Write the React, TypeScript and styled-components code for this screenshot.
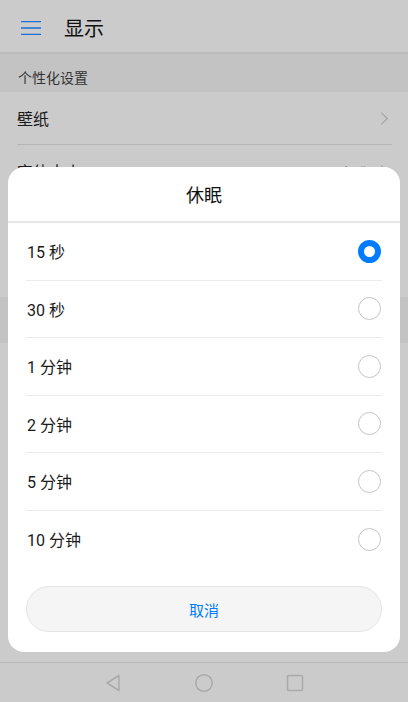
import React from "react";
import styled, { createGlobalStyle } from "styled-components";

const GlobalStyle = createGlobalStyle`
  html, body {
    margin: 0;
    padding: 0;
    height: 100%;
  }
  body {
    font-family: Roboto, "Noto Sans CJK SC", "Noto Sans", sans-serif;
    background: #cbcbcb;
    -webkit-font-smoothing: antialiased;
  }
`;

const options = ["15 秒", "30 秒", "1 分钟", "2 分钟", "5 分钟", "10 分钟"];

export default function App() {
  return (
    <Screen>
      <GlobalStyle />
      <Page>
        <Header>
          <MenuIcon viewBox="0 0 22 16">
            <path d="M0 1h22M0 8h22M0 15h22" stroke="#1a6fd6" strokeWidth="1.6" />
          </MenuIcon>
          <HeaderTitle>显示</HeaderTitle>
        </Header>
        <SectionTitle>个性化设置</SectionTitle>
        <Row>
          <RowLabel>壁纸</RowLabel>
          <Chevron />
        </Row>
        <Row>
          <RowLabel>字体大小</RowLabel>
          <RowValue>标准</RowValue>
          <Chevron />
        </Row>
        {/* rows hidden under the dialog */}
        <Row $height={98} />
        <SectionTitle $tall />
        <Row />
        <Row />
        <Row />
        <Spacer />
        <NavBar>
          <svg width="20" height="20" viewBox="0 0 20 20">
            <path d="M16 2.5 L4 10 L16 17.5 Z" fill="none" stroke="#aaaaaa" strokeWidth="1.5" strokeLinejoin="round" />
          </svg>
          <svg width="20" height="20" viewBox="0 0 20 20">
            <circle cx="10" cy="10" r="8.3" fill="none" stroke="#aaaaaa" strokeWidth="1.5" />
          </svg>
          <svg width="20" height="20" viewBox="0 0 20 20">
            <rect x="2.5" y="2.5" width="15" height="15" rx="1.2" fill="none" stroke="#aaaaaa" strokeWidth="1.5" />
          </svg>
        </NavBar>
      </Page>

      <Dialog>
        <DialogTitle>休眠</DialogTitle>
        <OptionList>
          {options.map((label, i) => (
            <OptionRow key={label} $last={i === options.length - 1}>
              <OptionLabel>{label}</OptionLabel>
              <Radio $checked={i === 0} />
            </OptionRow>
          ))}
        </OptionList>
        <CancelButton>取消</CancelButton>
      </Dialog>
    </Screen>
  );
}

const Screen = styled.div`
  position: relative;
  width: 408px;
  height: 702px;
  overflow: hidden;
`;

const Page = styled.div`
  display: flex;
  flex-direction: column;
  height: 100%;
  background: #cbcbcb;
`;

const Header = styled.div`
  display: flex;
  align-items: center;
  height: 49px;
  padding: 3px 0 0 21px;
  border-bottom: 2px solid #bdbdbd;
  box-sizing: content-box;
`;

const MenuIcon = styled.svg`
  width: 20px;
  height: 16px;
  margin-right: 23px;
`;

const HeaderTitle = styled.div`
  font-size: 20px;
  color: #111;
`;

const SectionTitle = styled.div<{ $tall?: boolean }>`
  display: flex;
  align-items: center;
  box-sizing: border-box;
  height: ${(p) => (p.$tall ? "46px" : "38px")};
  padding: 8px 0 0 18px;
  background: #c3c3c3;
  font-size: 14px;
  color: #333;
`;

const Row = styled.div<{ $height?: number }>`
  display: flex;
  align-items: center;
  height: ${(p) => p.$height ?? 52}px;
  margin: 0 16px 0 17px;
  border-bottom: 1px solid #b5b5b5;
`;

const RowLabel = styled.div`
  flex: 1;
  font-size: 16px;
  color: #1a1a1a;
`;

const RowValue = styled.div`
  font-size: 13px;
  color: #7a7a7a;
  margin-right: 8px;
`;

const Chevron = styled.span`
  width: 8px;
  height: 8px;
  border-top: 1.5px solid #9c9c9c;
  border-right: 1.5px solid #9c9c9c;
  transform: rotate(45deg);
  margin-right: 6px;
`;

const Spacer = styled.div`
  flex: 1;
`;

const NavBar = styled.div`
  display: flex;
  align-items: center;
  justify-content: center;
  gap: 71px;
  height: 39px;
  border-top: 1px solid #b8b8b8;
`;

const Dialog = styled.div`
  position: absolute;
  left: 8px;
  top: 167px;
  width: 392px;
  display: flex;
  flex-direction: column;
  background: #fff;
  border-radius: 16px;
  padding-bottom: 20px;
`;

const DialogTitle = styled.div`
  height: 54px;
  display: flex;
  align-items: center;
  justify-content: center;
  font-size: 18px;
  color: #111;
  border-bottom: 2px solid #e6e6e6;
`;

const OptionList = styled.div`
  display: flex;
  flex-direction: column;
  padding: 0 18px;
  margin-bottom: 18px;
`;

const OptionRow = styled.div<{ $last?: boolean }>`
  display: flex;
  align-items: center;
  justify-content: space-between;
  height: 57.5px;
  box-sizing: border-box;
  border-bottom: ${(p) => (p.$last ? "none" : "1px solid #ececec")};
`;

const OptionLabel = styled.div`
  font-size: 16px;
  color: #1a1a1a;
  padding-left: 1px;
`;

const Radio = styled.span<{ $checked?: boolean }>`
  box-sizing: border-box;
  width: 23px;
  height: 23px;
  border-radius: 50%;
  margin-right: 1px;
  border: ${(p) => (p.$checked ? "6.5px solid #007dff" : "1px solid #c4c4c4")};
  background: #fff;
`;

const CancelButton = styled.button`
  margin: 0 18px;
  height: 46px;
  border-radius: 23px;
  border: 1px solid #e4e4e4;
  background: #f5f5f5;
  color: #007dff;
  font-family: Roboto, "Noto Sans CJK SC", sans-serif;
  font-size: 15px;
`;
